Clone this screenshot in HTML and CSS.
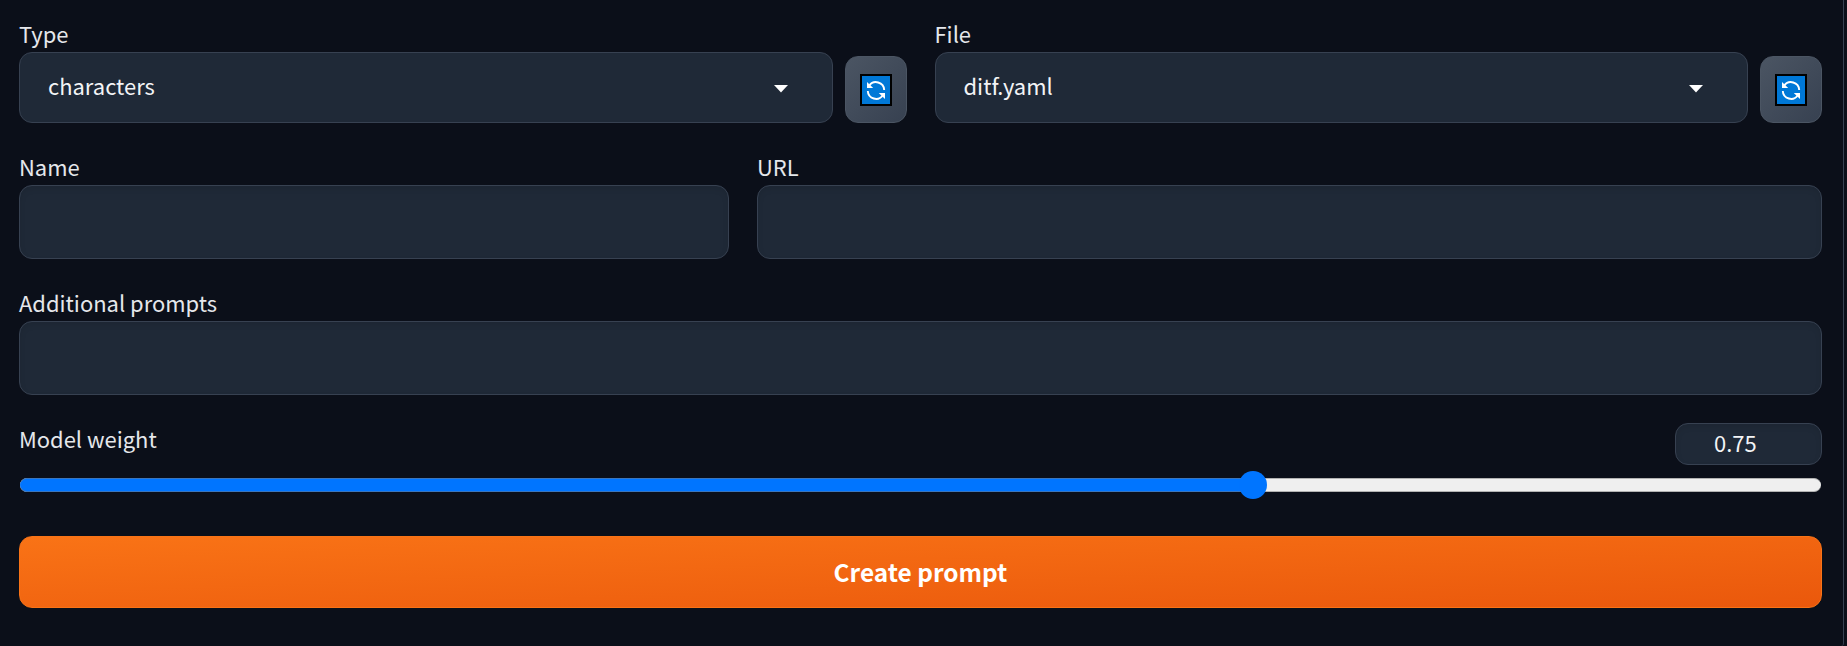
FILE: index.html
```html
<!DOCTYPE html>
<html lang="en">
<head>
<meta charset="utf-8">
<title>Prompt builder</title>
<link rel="stylesheet" href="styles.css">
</head>
<body>
<svg class="defs" width="0" height="0">
  <symbol id="refresh" viewBox="0 0 32 32">
    <rect width="32" height="32" fill="#000"/>
    <rect x="2" y="2" width="28" height="28" fill="#0078d7"/>
    <path d="M9.2 11.8A8.2 8.2 0 0 1 24.2 16M7.8 17A8.2 8.2 0 0 0 22.8 21.2" fill="none" stroke="#fff" stroke-width="1.9"/>
    <path d="M7 8v6.1h6.2zM25 25v-6.100h-6.200z" fill="#fff"/>
  </symbol>
</svg>
<main class="panel">
  <div class="row">
    <div class="picker">
      <div class="field">
        <label class="label">Type</label>
        <div class="select"><span class="value">characters</span><svg class="caret" viewBox="0 0 14 8"><path d="M0 0h14L7 7.500z"/></svg></div>
      </div>
      <button class="refresh"><svg class="icon"><use href="#refresh"/></svg></button>
    </div>
    <div class="picker">
      <div class="field">
        <label class="label">File</label>
        <div class="select"><span class="value">ditf.yaml</span><svg class="caret" viewBox="0 0 14 8"><path d="M0 0h14L7 7.500z"/></svg></div>
      </div>
      <button class="refresh"><svg class="icon"><use href="#refresh"/></svg></button>
    </div>
  </div>
  <div class="row">
    <div class="field name"><label class="label">Name</label><div class="input"></div></div>
    <div class="field url"><label class="label">URL</label><div class="input"></div></div>
  </div>
  <div class="field"><label class="label">Additional prompts</label><div class="input"></div></div>
  <div class="weight">
    <div class="weight-head">
      <label class="label">Model weight</label>
      <div class="number">0.75</div>
    </div>
    <div class="track"><div class="fill"></div><div class="thumb"></div></div>
  </div>
  <button class="create">Create prompt</button>
</main>
</body>
</html>
```
FILE: styles.css
```css
* { box-sizing: border-box; }
body {
  margin: 0;
  background: #0b0f19;
  color: #f3f4f6;
  font: 21.95px/31px "Noto Sans CJK JP", "Noto Sans", sans-serif;
  overflow: hidden;
}
.defs { display: block; }
.panel {
  display: flex;
  flex-direction: column;
  gap: 28px;
  width: 1844px;
  height: 646px;
  padding: 18px 21px 0 19px;
  border-right: 1px solid #374151;
  border-bottom-right-radius: 3px;
}
.row { display: flex; gap: 28px; }
.picker { flex: 1; display: flex; align-items: flex-end; gap: 12px; }
.field { display: flex; flex-direction: column; flex: 1; min-width: 0; }
.panel > .field { flex: none; }
.row > .name { flex: none; width: 710px; }
.label { height: 34px; color: #e5e7eb; }
.select, .input, .number {
  background: #1f2937;
  border: 1px solid #374151;
  border-radius: 13px;
}
.select {
  display: flex;
  justify-content: space-between;
  height: 71px;
  padding: 17px 44px 0 28px;
}
.caret { width: 14px; height: 8px; margin-top: 15px; fill: #fff; }
.input { height: 74px; box-shadow: inset 0 3px 6px rgba(0, 0, 0, .08); }
.refresh {
  display: flex;
  align-items: center;
  justify-content: center;
  width: 62px;
  height: 67px;
  padding: 0;
  border: 1px solid #4b5563;
  border-radius: 13px;
  background: linear-gradient(to bottom right, #4b5563, #374151);
}
.icon { width: 32px; height: 32px; }
.weight { display: flex; flex-direction: column; gap: 13px; }
.weight-head { display: flex; justify-content: space-between; height: 42px; }
.number {
  width: 147px;
  height: 42px;
  padding: 3px 0 0 38px;
  box-shadow: inset 0 3px 6px rgba(0, 0, 0, .08);
}
.track {
  position: relative;
  height: 14px;
  margin: 0 1px;
  border: 1px solid #b2b2b2;
  border-width: 1px 0;
  border-radius: 7px;
  background: #efefef;
}
.fill {
  width: 1233px;
  height: 14px;
  margin-top: -1px;
  border: 1px solid #3b76bd;
  border-width: 1px 0;
  border-radius: 7px 0 0 7px;
  background: #0075ff;
}
.thumb {
  position: absolute;
  left: 1219px;
  top: -8px;
  width: 28px;
  height: 28px;
  border-radius: 50%;
  background: #0075ff;
}
.create {
  height: 72px;
  margin-top: 16px;
  padding: 0 0 1px;
  border: 1px solid #f97316;
  border-radius: 13px;
  background: linear-gradient(to bottom right, #f97316, #ea580c);
  color: #fff;
  font: bold 24.4px/34px "Noto Sans CJK JP", "Noto Sans", sans-serif;
}
```
